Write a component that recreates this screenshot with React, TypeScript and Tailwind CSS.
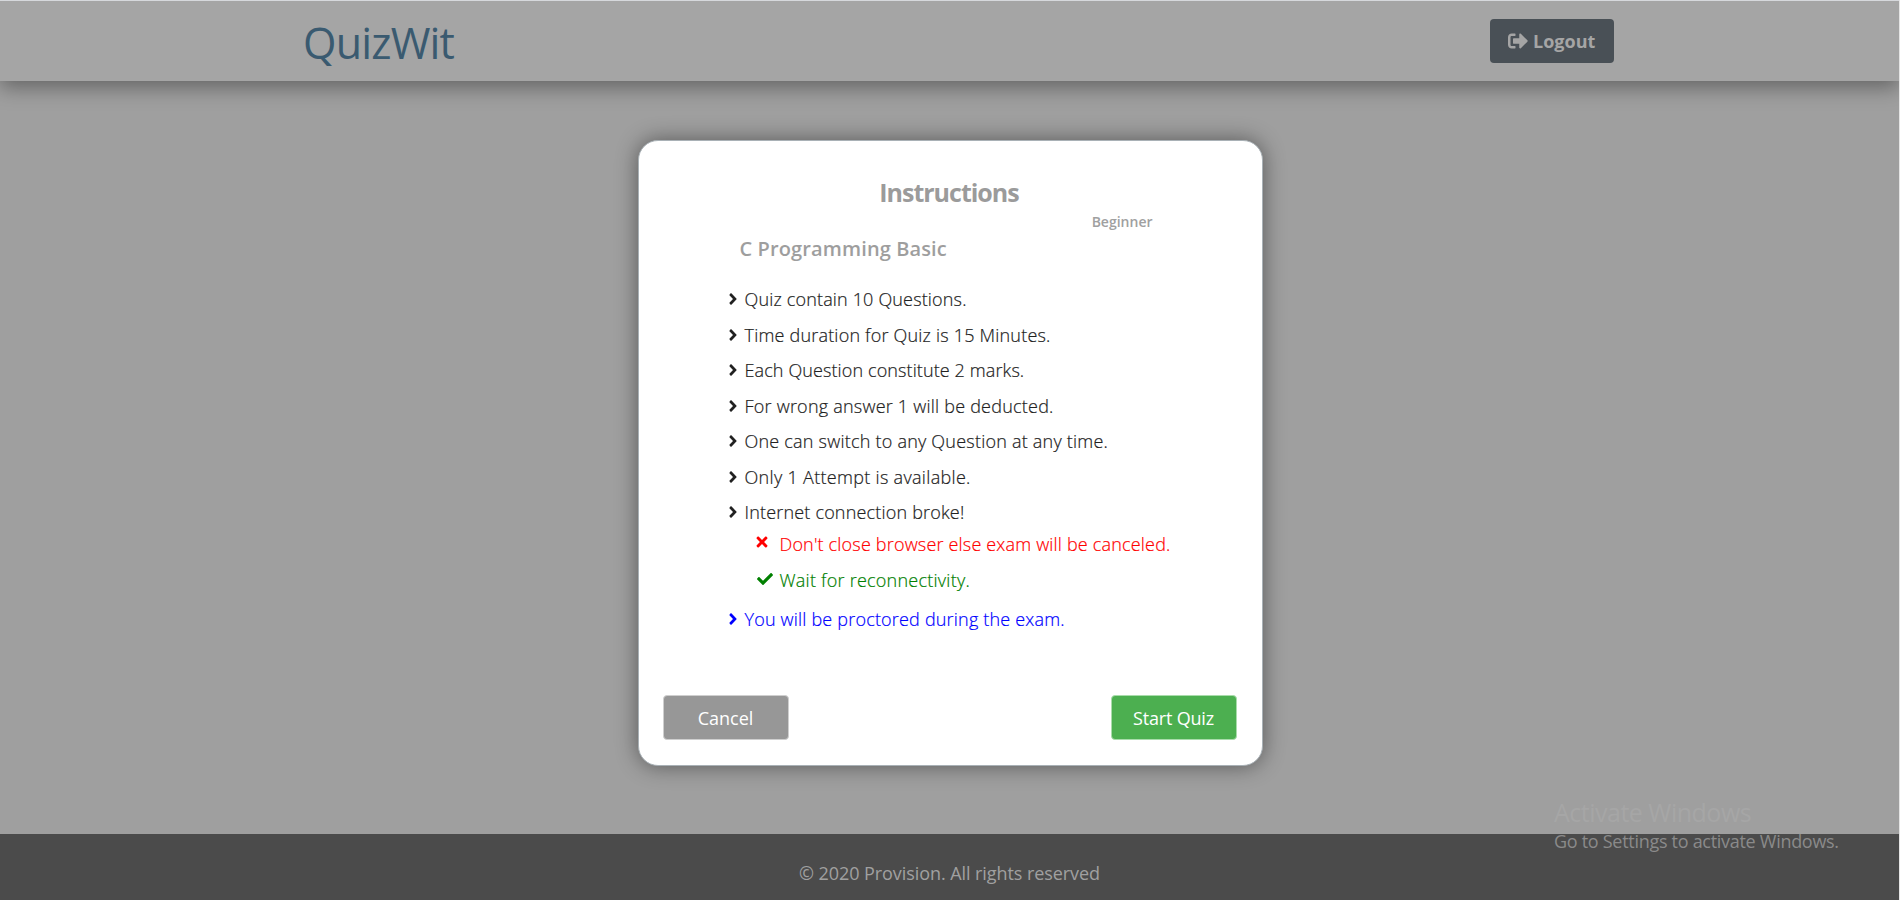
import { FaSignOutAlt, FaAngleRight, FaTimes, FaCheck } from "react-icons/fa";

const rules = [
  { text: "Quiz contain 10 Questions.", track: "tracking-[0.16px]" },
  { text: "Time duration for Quiz is 15 Minutes.", track: "tracking-[0.2px]" },
  { text: "Each Question constitute 2 marks.", track: "tracking-[0.11px]" },
  { text: "For wrong answer 1 will be deducted.", track: "tracking-[0.22px]" },
  { text: "One can switch to any Question at any time.", track: "tracking-[0.22px]" },
  { text: "Only 1 Attempt is available.", track: "tracking-[0.31px]" },
  { text: "Internet connection broke!", track: "tracking-[0.18px]" },
];

function Header() {
  return (
    <header className="relative z-10 flex h-[81px] shrink-0 items-start justify-between border-t border-[#d6d8dc] bg-[#a5a5a5] pr-[285px] pl-[303px] shadow-[0_6px_20px_rgba(0,0,0,0.38)]">
      <h1 className="mt-[14px] text-[43px] leading-[56px] font-normal tracking-[-0.8px] text-[#3a5a70]">QuizWit</h1>
      <button className="mt-[18px] flex h-11 w-[124px] items-center rounded-[4px] bg-[#495056] pl-[18px] text-lg leading-6 font-bold text-[#a5a5a5]">
        <FaSignOutAlt className="mr-[5px] size-5" />
        <span>Logout</span>
      </button>
    </header>
  );
}

function Dialog() {
  return (
    <section className="mt-[59px] ml-px flex h-[626px] w-[625px] shrink-0 flex-col rounded-[20px] border border-[#a9b1b6] bg-white shadow-[0_0_22px_rgba(0,0,0,0.45)]">
      <h2 className="mt-[34px] pr-[2px] text-center text-[25px] leading-[34px] font-bold tracking-[-1px] text-[#9b9b9b]">Instructions</h2>
      <div className="mt-[3px] pr-[109px] text-right text-[14px] leading-5 font-semibold text-[#a0a0a0]">Beginner</div>
      <h3 className="mt-[2px] pl-[101px] text-[20px] leading-[30px] font-semibold tracking-[0.12px] text-[#9e9e9e]">C Programming Basic</h3>
      <ul className="mt-[18px] pl-[85px] text-[18px] font-light text-[#212121] [-webkit-text-stroke:0.2px]">
        {rules.map((r) => (
          <li key={r.text} className="flex h-[35.5px] items-center">
            <FaAngleRight className="mr-[3px] mb-px size-[18px]" />
            <span className={r.track}>{r.text}</span>
          </li>
        ))}
        <li className="mt-[-4px] flex h-[35.5px] items-center pl-[30px] text-[#ff0000]">
          <FaTimes className="mr-[10px] mb-1 size-4" />
          <span className="tracking-[0.18px]">Don&apos;t close browser else exam will be canceled.</span>
        </li>
        <li className="mt-px flex h-[35.5px] items-center pl-[33px] text-[#008000]">
          <FaCheck className="mr-[7px] mb-1 size-4" />
          <span className="tracking-[0.24px]">Wait for reconnectivity.</span>
        </li>
        <li className="mt-[3px] flex h-[35.5px] items-center text-[#0000ff]">
          <FaAngleRight className="mr-[3px] mb-px size-[18px]" />
          <span className="tracking-[0.19px]">You will be proctored during the exam.</span>
        </li>
      </ul>
      <div className="mt-auto mb-[25px] flex justify-between pr-[25px] pl-6 text-[18px] leading-6 text-white">
        <button className="h-[45px] w-[126px] rounded-[4px] border border-[#cfcfcf] bg-[#979797]">Cancel</button>
        <button className="h-[45px] w-[126px] rounded-[4px] border border-[#a9dcab] bg-[#4caf50] tracking-[-0.2px]">Start Quiz</button>
      </div>
    </section>
  );
}

export default function App() {
  return (
    <div className="relative flex h-[900px] w-[1900px] flex-col overflow-hidden border-r border-[#e4e4e4] bg-[#9f9f9f] font-['Open_Sans','Noto_Sans',sans-serif]">
      <Header />
      <main className="flex flex-1 justify-center">
        <Dialog />
      </main>
      <footer className="flex h-[66px] shrink-0 justify-center bg-[#4b4b4b] pt-[27px] text-[18px] leading-6 text-[#a0a0a0]">
        <span className="tracking-[-0.07px]">© 2020 Provision. All rights reserved</span>
      </footer>
      <div className="absolute top-[795px] left-[1554px] whitespace-nowrap">
        <div className="text-[25px] leading-[34px] tracking-[-0.5px] text-[#a6a6a6]">Activate Windows</div>
        <div className="text-[18px] leading-6 tracking-[-0.29px] text-[#8a8a8a]">Go to Settings to activate Windows.</div>
      </div>
    </div>
  );
}
